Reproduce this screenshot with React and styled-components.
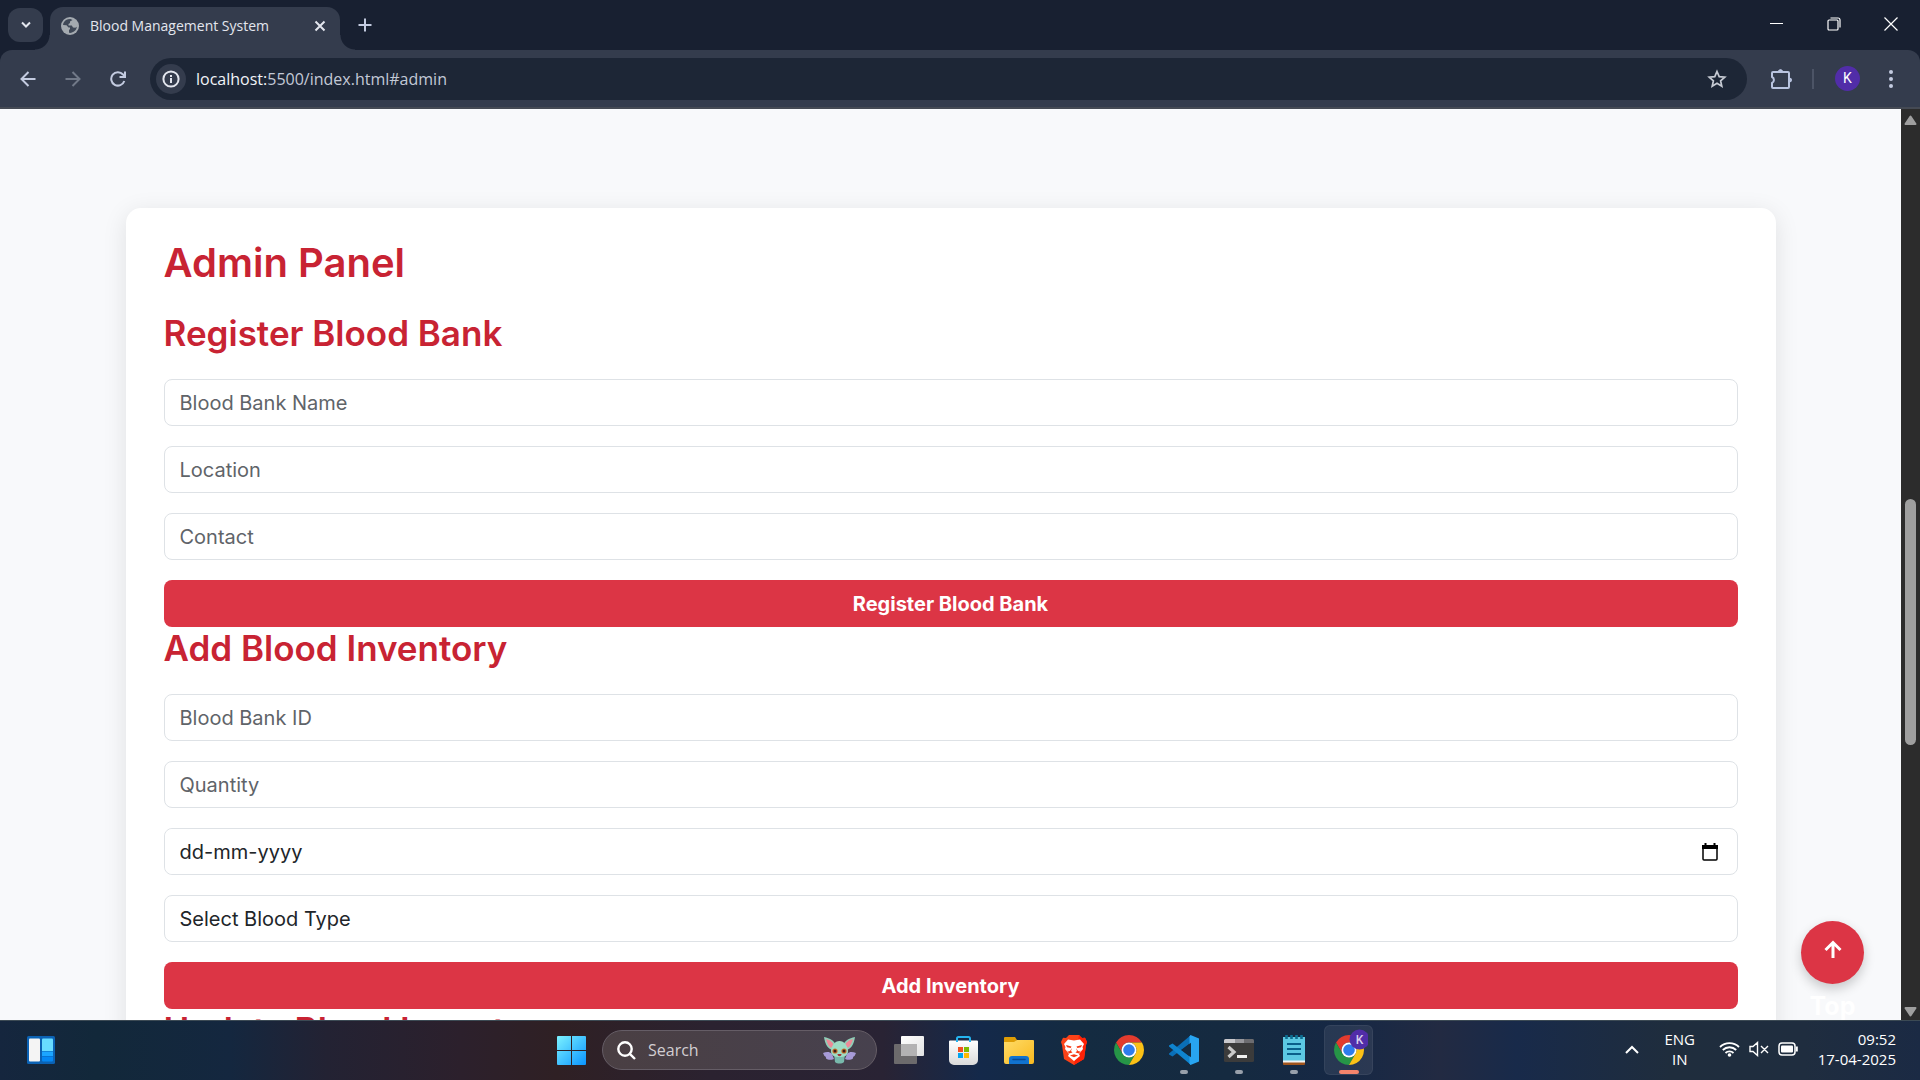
import React from 'react';
import styled, { createGlobalStyle } from 'styled-components';

const ui = '"Open Sans", "Noto Sans", sans-serif';

const Global = createGlobalStyle`
  * { box-sizing: border-box; }
  body { margin: 0; background: #f8f9fb; font-family: Inter, sans-serif; }
  button, input, select { font: inherit; margin: 0; }
  button { border: 0; padding: 0; background: none; color: inherit; cursor: pointer; }
  svg { display: block; flex: none; }
`;

const Screen = styled.div`
  height: 100vh;
  display: flex;
  flex-direction: column;
  overflow: hidden;
`;

/* ---------- browser frame ---------- */

const TabStrip = styled.header`
  flex: none;
  height: 50px;
  display: flex;
  padding-left: 8px;
  background: #182031;
  color: #e3e6ee;
  font-family: ${ui};
`;

const TabSearch = styled.button`
  width: 35px;
  height: 34px;
  margin-top: 8px;
  border-radius: 12px;
  background: #343c4d;
  display: grid;
  place-items: center;
`;

const Tab = styled.div`
  position: relative;
  width: 290px;
  margin: 7px 0 0 7px;
  padding: 0 12px 6px 11px;
  display: flex;
  align-items: center;
  gap: 11px;
  border-radius: 13px 13px 0 0;
  background: #343c4d;

  &::before, &::after {
    content: '';
    position: absolute;
    bottom: 0;
    width: 15px;
    height: 15px;
  }
  &::before {
    left: -15px;
    background: radial-gradient(circle at 0 0, transparent 14px, #343c4d 15px);
  }
  &::after {
    right: -15px;
    background: radial-gradient(circle at 100% 0, transparent 14px, #343c4d 15px);
  }
`;

const TabTitle = styled.span`
  flex: 1;
  font-size: 14px;
  line-height: 20px;
  white-space: nowrap;
`;

const FlatButton = styled.button`
  width: ${(p) => p.$w || 16}px;
  display: grid;
  place-items: center;
  color: ${(p) => p.$color || '#e3e6ee'};
`;

const NewTab = styled(FlatButton)`
  margin-left: 9px;
  height: 50px;
`;

const WindowButtons = styled.div`
  margin-left: auto;
  padding-right: 1px;
  display: flex;
  height: 48px;
`;

const Toolbar = styled.div`
  background: #182031;
  flex: none;
`;

const ToolbarInner = styled.div`
  height: 59px;
  padding: 0 7px 0 5px;
  display: flex;
  align-items: center;
  background: #343c4d;
  border-bottom: 2px solid #454a54;
  border-radius: 12px 12px 0 0;
  font-family: ${ui};
`;

const Omnibox = styled.div`
  flex: 1;
  height: 42px;
  margin: 0 12px 0 10px;
  padding: 0 20px 0 6px;
  display: flex;
  align-items: center;
  gap: 10px;
  border-radius: 21px;
  background: #1d2636;
  color: #c3c9d6;
`;

const SiteInfo = styled.button`
  width: 30px;
  height: 30px;
  border-radius: 50%;
  background: #343c4d;
  color: #e3e6ee;
  display: grid;
  place-items: center;
`;

const Address = styled.div`
  flex: 1;
  font-size: 16px;
  line-height: 24px;
  b { font-weight: 400; color: #f1f3f8; }
`;

const Divider = styled.span`
  width: 2px;
  height: 20px;
  margin: 0 21px 0 9px;
  background: #4c5466;
`;

const Avatar = styled.button`
  width: 25px;
  height: 25px;
  margin-right: 9px;
  border-radius: 50%;
  background: #512da8;
  color: #fff;
  font-family: Roboto, sans-serif;
  font-size: 14px;
  line-height: 25px;
`;

/* ---------- page ---------- */

const Viewport = styled.div`
  position: relative;
  flex: 1;
  min-height: 0;
  display: flex;
  overflow: hidden;
`;

const Page = styled.main`
  flex: 1;
  padding-top: 99px;
  overflow: hidden;
  background: #f8f9fb;
`;

const Card = styled.section`
  width: calc(100% - 48px);
  max-width: 1650px;
  margin: 0 auto;
  padding: 31px 38px;
  border-radius: 15px;
  background: #fff;
  box-shadow: 0 5px 25px rgba(0, 0, 0, 0.1);
`;

const Title = styled.h2`
  margin: 0 0 25px;
  color: #c82333;
  font-size: 40px;
  font-weight: 600;
  line-height: 48px;
`;

const Subtitle = styled.h3`
  margin: 0 0 25px;
  color: #c82333;
  font-size: 35px;
  font-weight: 600;
  line-height: 42px;
`;

const Form = styled.form`
  display: flex;
  flex-direction: column;
  gap: 20px;
`;

const Field = styled.input`
  width: 100%;
  height: 47px;
  padding: 0 15px;
  border: 1px solid #dee2e6;
  border-radius: 8px;
  background: #fff;
  color: #212529;
  font-size: 20px;
  line-height: 30px;
  outline: 0;
  &::placeholder { color: ${(p) => p.$ink || '#5f6469'}; opacity: 1; }
`;

const Select = styled(Field).attrs({ as: 'select' })`
  appearance: none;
`;

const DateBox = styled.div`
  display: flex;
  align-items: center;
  padding-right: 19px;
  border: 1px solid #dee2e6;
  border-radius: 8px;
`;

const DateField = styled(Field)`
  flex: 1;
  height: 45px;
  border: 0;
`;

const Submit = styled.button`
  height: 47px;
  border-radius: 8px;
  background: #dc3545;
  color: #fff;
  font-size: 20px;
  font-weight: 700;
  line-height: 30px;
`;

const ToTop = styled.button`
  position: absolute;
  right: 56px;
  bottom: 36px;
  width: 63px;
  height: 63px;
  padding-top: 19px;
  display: flex;
  flex-direction: column;
  align-items: center;
  gap: 30px;
  border-radius: 50%;
  background: #dc3545;
  box-shadow: 0 5px 12px rgba(0, 0, 0, 0.2);
  color: #fff;
  font-size: 25px;
  font-weight: 700;
  line-height: 37px;
`;

const Scrollbar = styled.div`
  width: 19px;
  display: flex;
  flex-direction: column;
  align-items: center;
  padding: 6px 0 3px;
  background: #2c2c2c;
`;

const Track = styled.div`
  flex: 1;
  display: grid;
  grid-template-rows: 374fr 246fr 262fr;
`;

const Thumb = styled.div`
  grid-row: 2;
  width: 11px;
  border-radius: 6px;
  background: #9f9f9f;
`;

/* ---------- taskbar ---------- */

const Taskbar = styled.footer`
  flex: none;
  height: 60px;
  padding-bottom: 1px;
  display: grid;
  grid-template-columns: 1fr auto 1fr;
  align-items: center;
  border-top: 1px solid #3c4a54;
  background: linear-gradient(90deg, #15263e 0, #12283a 5%, #14273f 12%, #232233 17%, #2c202c 24%, #2f2024 29%,
    #2b2230 37%, #292334 46%, #14294a 51%, #142b41 56%, #152a40 64%, #162845 70%, #222a42 75%, #182a4a 79%, #1f2d3d 87%, #1f2d3f 94%, #1b2a44 100%);
  color: #fff;
  font-family: ${ui};
`;

const Widgets = styled.button`
  width: 28px;
  margin-left: 27px;
`;

const Apps = styled.nav`
  display: flex;
  align-items: center;
`;

const App_ = styled.button`
  position: relative;
  width: 49px;
  height: 50px;
  margin: 0 3px;
  display: grid;
  place-items: center;
  border-radius: 6px;
  ${(p) => p.$active && `
    background: rgba(255, 255, 255, 0.08);
    box-shadow: inset 0 0 0 1px rgba(255, 255, 255, 0.06);
  `}
  &::after {
    content: '';
    display: ${(p) => (p.$open ? 'block' : 'none')};
    position: absolute;
    bottom: 1px;
    left: 50%;
    width: ${(p) => (p.$active ? 20 : 8)}px;
    height: 4px;
    transform: translateX(-50%);
    border-radius: 2px;
    background: ${(p) => (p.$active ? '#f4846c' : '#98a0ab')};
  }
`;

const SearchBox = styled.label`
  width: 275px;
  height: 40px;
  margin: 0 4px 0 3px;
  padding: 0 20px 0 14px;
  display: flex;
  align-items: center;
  gap: 12px;
  border: 1px solid #655d66;
  border-radius: 20px;
  background: linear-gradient(90deg, #4a3f43, #47414e);
`;

const SearchInput = styled.input`
  flex: 1;
  min-width: 0;
  padding: 0;
  border: 0;
  outline: 0;
  background: none;
  color: #fff;
  font-size: 16px;
  line-height: 24px;
  &::placeholder { color: #d2ced2; opacity: 1; }
`;

const Tray = styled.div`
  display: flex;
  justify-content: flex-end;
  align-items: center;
  padding: 0 24px 2px 0;
`;

const Lang = styled.button`
  width: 34px;
  margin: 0 22px 0 24px;
  font-size: 15px;
  line-height: 20px;
`;

const Status = styled.button`
  display: flex;
  align-items: center;
  gap: 9px;
  margin-right: 20px;
`;

const Clock = styled.button`
  text-align: right;
  font-size: 15px;
  line-height: 20px;
`;

/* ---------- icons ---------- */

const Line = ({ w = 24, h = w, box = `0 0 ${w} ${h}`, sw = 2, children, ...rest }) => (
  <svg width={w} height={h} viewBox={box} fill="none" stroke="currentColor" strokeWidth={sw} {...rest}>{children}</svg>
);

const Globe = () => (
  <svg width="18" height="18" viewBox="0 0 18 18">
    <circle cx="9" cy="9" r="9" fill="#a4aab0" />
    <path d="M7 2.200C4 3 2.200 5.300 2 8l3.500.2 2 2.300H9V12l-1 1v2.800c3.800.6 7.500-2.200 7.800-6l-1.500 1-2.300-.3-1.200-2H7.500V7L9 6V4.500L11.500 3 9.500 2z" fill="#3f4857" />
    <path d="M2 8.500 6.500 13v2.500C4 14.800 2 12 2 8.500z" fill="#a4aab0" />
  </svg>
);

const ChromeLogo = ({ badge }) => (
  <svg width="38" height="42" viewBox="-4 -6 38 42">
    <g transform="scale(.625)">
      <path d="M3.220 12A24 24 0 0 1 44.780 12H24A12 12 0 0 0 13.610 30z" fill="#e33b2e" />
      <path d="M3.220 12 13.610 30A12 12 0 0 0 34.390 30L24 48A24 24 0 0 1 3.220 12z" fill="#269547" />
      <path d="M44.780 12A24 24 0 0 1 24 48L34.390 30A12 12 0 0 0 24 12z" fill="#fbc116" />
      <circle cx="24" cy="24" r="12" fill="#fff" />
      <circle cx="24" cy="24" r="9.300" fill="#2f7cee" />
    </g>
    {badge && (
      <g>
        <circle cx="25.500" cy="4.500" r="10" fill="#512da8" />
        <text x="25.500" y="9" textAnchor="middle" fontSize="12" fontWeight="500" fontFamily="Roboto, sans-serif" fill="#d9d0ee">K</text>
      </g>
    )}
  </svg>
);

const WidgetsIcon = () => (
  <svg width="28" height="28" viewBox="0 0 28 28">
    <rect width="28" height="28" rx="1.500" fill="#0b62b4" />
    <rect x="2" y="2.500" width="11" height="23" rx="1" fill="#f4f4f4" />
    <path d="M15 3.500a1 1 0 0 1 1-1h9a1 1 0 0 1 1 1V15H15z" fill="#68dcff" />
    <path d="M15 15.500h11v4.500H15z" fill="#1ca6ff" />
    <path d="M15 20.500h11v4a1 1 0 0 1-1 1h-9a1 1 0 0 1-1-1z" fill="#0587f2" />
  </svg>
);

const StartIcon = () => (
  <svg width="29" height="29" viewBox="0 0 29 29">
    <defs>
      <linearGradient id="win" gradientUnits="userSpaceOnUse" x1="0" y1="0" x2="29" y2="29">
        <stop offset="0" stopColor="#7cf2ff" /><stop offset="1" stopColor="#0a94ff" />
      </linearGradient>
    </defs>
    <path fill="url(#win)" d="M1 0h13v14H0V1a1 1 0 0 1 1-1zM15 0h13a1 1 0 0 1 1 1v13H15zM0 15h14v14H1a1 1 0 0 1-1-1zM15 15h14v13a1 1 0 0 1-1 1H15z" />
  </svg>
);

const Creature = () => (
  <svg width="33" height="27" viewBox="0 0 33 27">
    <path d="M9 17C6 14 3 15 0 16c1 2 1 3 3 4-1 2 3 4 8 2zM24 17c3-3 6-2 9-1-1 2-1 3-3 4 1 2-3 4-8 2z" fill="#a79bd8" />
    <path d="M11 13C5 13 2 7 1 0c6 1 11 4 12 9zM22 13c6 0 9-6 10-13-6 1-11 4-12 9z" fill="#8fcfb8" />
    <path d="M10 11C6 11 4 6 3 2c4 1 7 3 8 7zM23 11c4 0 6-5 7-9-4 1-7 3-8 7z" fill="#ee8a97" />
    <path d="M11 17h11l-1 8c-2 2-7 2-9 0z" fill="#78b9ab" />
    <path d="M16.500 4C21 4 25 9 25 14s-4 6-8.500 6S8 19 8 14s4-10 8.500-10z" fill="#9edcc4" />
    <circle cx="12" cy="14" r="2.600" fill="#c8702c" /><circle cx="21" cy="14" r="2.600" fill="#c8702c" />
    <circle cx="12" cy="14" r="1.500" fill="#3a1c18" /><circle cx="21" cy="14" r="1.500" fill="#3a1c18" />
    <path d="M14.500 17h4c0 3-4 3-4 0z" fill="#a3303a" />
  </svg>
);

const TaskView = () => (
  <svg width="30" height="28" viewBox="0 0 30 28">
    <defs><linearGradient id="tv" x1="0" y1="0" x2="1" y2="1"><stop offset="0" stopColor="#fff" /><stop offset="1" stopColor="#e2e2e2" /></linearGradient></defs>
    <rect y="8" width="23" height="20" rx="1" fill="#6c6a6c" />
    <rect x="7" width="23" height="20" rx="1" fill="url(#tv)" />
    <path d="M7 8h16v12H8a1 1 0 0 1-1-1z" fill="#b3b2b3" />
  </svg>
);

const Store = () => (
  <svg width="29" height="29" viewBox="0 0 29 29">
    <defs><linearGradient id="st" x1="0" y1="0" x2="0" y2="1"><stop offset="0" stopColor="#fff" /><stop offset="1" stopColor="#dadada" /></linearGradient></defs>
    <path d="M1 4.500h27a1 1 0 0 1 1 1V24a5 5 0 0 1-5 5H5a5 5 0 0 1-5-5V5.500a1 1 0 0 1 1-1z" fill="url(#st)" />
    <path d="M8 6V2.500A1.500 1.500 0 0 1 9.500 1h10A1.500 1.500 0 0 1 21 2.500V6" fill="none" stroke="#25b4f0" strokeWidth="2" />
    <path d="M9 11h5v5H9z" fill="#f25022" /><path d="M15 11h5v5h-5z" fill="#7fba00" />
    <path d="M9 17h5v5H9z" fill="#00a4ef" /><path d="M15 17h5v5h-5z" fill="#ffb900" />
  </svg>
);

const Explorer = () => (
  <svg width="30" height="27" viewBox="0 0 30 27">
    <defs><linearGradient id="fo" x1="0" y1="0" x2="1" y2="1"><stop offset="0" stopColor="#ffdb67" /><stop offset="1" stopColor="#f9b91f" /></linearGradient></defs>
    <path d="M1 0h10l2 3-2 4H0V1a1 1 0 0 1 1-1z" fill="#de9d05" />
    <path d="M0 5h10l3-2h16a1 1 0 0 1 1 1v21a2 2 0 0 1-2 2H2a2 2 0 0 1-2-2z" fill="url(#fo)" />
    <path d="M5 27v-5a3 3 0 0 1 3-3h14a3 3 0 0 1 3 3v5z" fill="#1173d0" />
    <path d="M9 22.500h12" stroke="#0a4a94" strokeWidth="1.500" strokeLinecap="round" />
  </svg>
);

const Brave = () => (
  <svg width="26" height="30" viewBox="0 0 26 30">
    <path d="M8 0h10l3 3 3-.2L26 7l-1 3-2 14-10 6-10-6L1 10 0 7l2-4.200L5 3z" fill="#fb4218" />
    <path d="M18 0l3 3 3-.2L26 7l-1 3-2 14-10 6z" fill="#ff2105" />
    <path d="M7 4.500l6 1 6-1 4 4.500-1.500 3 .5 2-4 5 1 2-6 5-6-5 1-2-4-5 .5-2L3 9z" fill="#fff" />
    <path d="M5 10l5.500 1.500-.8 1.500-3.700-.8zM21 10l-5.500 1.500.8 1.500 3.700-.8z" fill="#f73a14" />
    <path d="M11 13l-1 3 1.500 1.500L8 18.500 5.500 15 7 16.500l2-.5zM15 13l1 3-1.500 1.500 3.500 1 2.500-3.500-1.500 1.500-2-.5z" fill="#f73a14" />
    <path d="M9 20.500l4 1.700 4-1.700-4-1.200z" fill="#f73a14" />
  </svg>
);

const Code = () => (
  <svg width="30" height="30" viewBox="0 0 30 30">
    <path d="M22 7.500 3.500 21.500 0 19.500v-1L22 0z" fill="#0a6fb8" />
    <path d="M22 22.500 3.500 8.500 0 10.500v1L22 30z" fill="#0f84cf" />
    <path d="M21.500 0 30 3.500v23L21.500 30l-1-1.500V1.500z" fill="#28a5f2" />
    <path d="M22 7.700v14.600L12.500 15z" fill="#142b41" />
  </svg>
);

const TerminalIcon = () => (
  <svg width="30" height="23" viewBox="0 0 30 23">
    <rect width="30" height="23" rx="1.500" fill="#3b3b3b" />
    <path d="M0 4V1.500A1.500 1.500 0 0 1 1.500 0H11v4z" fill="#c8c8cc" />
    <path d="M11 0h9v4h-9z" fill="#97979c" /><path d="M20 0h8.500A1.500 1.500 0 0 1 30 1.500V4H20z" fill="#6c6c70" />
    <path d="M4.500 8l5.500 5-5.500 5" fill="none" stroke="#c9c9c9" strokeWidth="3.200" />
    <path d="M13 17.500h10" stroke="#f0f0f0" strokeWidth="3" />
  </svg>
);

const Notepad = () => (
  <svg width="22" height="30" viewBox="0 0 22 30">
    <path d="M0 22h22v7a1 1 0 0 1-1 1H1a1 1 0 0 1-1-1z" fill="#a0541c" />
    <path d="M0 22h22v5.500H0z" fill="#f0f4f5" />
    <path d="M0 2h22v23.500H0z" fill="#5cc8e2" />
    <path d="M3.500 0v4M8.500 0v4M13.500 0v4M18.500 0v4" stroke="#0d6f92" strokeWidth="2.600" />
    <path d="M4 9h14M4 14h14M4 19h14" stroke="#0a5f8a" strokeWidth="2" />
  </svg>
);

const Wifi = () => (
  <Line w={21} h={16} sw={1.8}>
    <path d="M1 6a13.400 13.400 0 0 1 19 0M3.800 9a9.500 9.500 0 0 1 13.400 0M6.500 12a5.700 5.700 0 0 1 8 0" />
    <circle cx="10.500" cy="14" r="1.800" fill="currentColor" stroke="none" />
  </Line>
);

const Muted = () => (
  <Line w={20} h={16} sw={1.4}>
    <path d="M1 5.500h3L8.500 1.500v13L4 10.500H1zM12 5l7 7M19 5l-7 7" />
  </Line>
);

const Battery = () => (
  <Line w={20} h={14} sw={1.5}>
    <rect x="1" y="1" width="16" height="12" rx="3" />
    <rect x="3" y="3.500" width="12" height="7" rx="1" fill="currentColor" stroke="none" />
    <path d="M18.800 4.500v5" strokeWidth="2" />
  </Line>
);

const Caret = ({ up }) => (
  <svg width="13" height="10" viewBox="0 0 13 10" fill="#9f9f9f" stroke="#9f9f9f" strokeLinejoin="round" strokeWidth="2">
    <path d={up ? 'M1.500 9h10L6.500 1.500z' : 'M1.500 1h10L6.500 8.500z'} />
  </svg>
);

/* ---------- data ---------- */

const apps = [
  { name: 'Task View', icon: <TaskView /> },
  { name: 'Microsoft Store', icon: <Store /> },
  { name: 'File Explorer', icon: <Explorer /> },
  { name: 'Brave', icon: <Brave /> },
  { name: 'Google Chrome', icon: <ChromeLogo /> },
  { name: 'Visual Studio Code', icon: <Code />, open: true },
  { name: 'Terminal', icon: <TerminalIcon />, open: true },
  { name: 'Notepad', icon: <Notepad />, open: true },
  { name: 'Chrome profile K', icon: <ChromeLogo badge />, open: true, active: true },
];

const stop = (e) => e.preventDefault();

function Browser() {
  return (
    <>
      <TabStrip>
        <TabSearch aria-label="Search tabs"><Line w={12} h={8}><path d="M2 1.500l4 4 4-4" /></Line></TabSearch>
        <Tab>
          <Globe />
          <TabTitle>Blood Management System</TabTitle>
          <FlatButton aria-label="Close tab"><Line w={12}><path d="M1.500 1.500l9 9M10.500 1.500l-9 9" /></Line></FlatButton>
        </Tab>
        <NewTab $w={32} $color="#c3cbe0" aria-label="New tab"><Line w={14}><path d="M7 .5v13M.5 7h13" /></Line></NewTab>
        <WindowButtons>
          <FlatButton $w={57} $color="#fff" aria-label="Minimize"><Line w={13} sw={1}><path d="M0 5.500h13" /></Line></FlatButton>
          <FlatButton $w={57} $color="#fff" aria-label="Restore">
            <Line w={14} sw={1.2}><rect x="1" y="3" width="10" height="10" rx="1" /><path d="M3.500 1H11a2 2 0 0 1 2 2v7.500" /></Line>
          </FlatButton>
          <FlatButton $w={57} $color="#fff" aria-label="Close"><Line w={14} sw={1.2}><path d="M.5.5l13 13M13.500.5l-13 13" /></Line></FlatButton>
        </WindowButtons>
      </TabStrip>
      <Toolbar>
        <ToolbarInner>
          <FlatButton $w={45} $color="#c3cbe0" aria-label="Back"><Line w={16}><path d="M15.500 8H2M8.500 1 1.500 8l7 7" /></Line></FlatButton>
          <FlatButton $w={45} $color="#717988" aria-label="Forward"><Line w={16}><path d="M.5 8H14M7.500 1l7 7-7 7" /></Line></FlatButton>
          <FlatButton $w={45} $color="#c3cbe0" aria-label="Reload">
            <Line w={16}><path d="M14.300 10A6.700 6.700 0 1 1 13 3.500L15 6M15 .5V6H9.500" /></Line>
          </FlatButton>
          <Omnibox>
            <SiteInfo aria-label="Site information">
              <Line w={18}><circle cx="9" cy="9" r="7.600" /><path d="M9 8v5M9 5v2" /></Line>
            </SiteInfo>
            <Address><b>localhost:</b>5500/index.html#admin</Address>
            <FlatButton $w={20} $color="#c6cad3" aria-label="Bookmark">
              <Line w={20} sw={1.7}><path d="M10 2.500l2.200 5.100 5.600.5-4.200 3.700 1.200 5.400L10 14.300l-4.800 2.900 1.200-5.400L2.200 8.100l5.600-.5z" /></Line>
            </FlatButton>
          </Omnibox>
          <FlatButton $w={44} $color="#b9c4e0" aria-label="Extensions">
            <Line w={22}>
              <path d="M3 4h15a1 1 0 0 1 1 1v14a1 1 0 0 1-1 1H3a1 1 0 0 1-1-1v-4a3.300 3.300 0 0 0 0-6V5a1 1 0 0 1 1-1z" strokeLinejoin="round" />
              <path d="M8 4a2.500 2.500 0 0 1 5 0zM19 9.500a2.500 2.500 0 0 1 0 5z" fill="currentColor" stroke="none" />
              <path d="M8.300 3a2.300 2.300 0 0 1 4.400 0zM20 10a2 2 0 0 1 0 4z" fill="currentColor" stroke="none" />
            </Line>
          </FlatButton>
          <Divider />
          <Avatar aria-label="Profile">K</Avatar>
          <FlatButton $w={44} $color="#c3cbe0" aria-label="Menu">
            <svg width="4" height="18" viewBox="0 0 4 18" fill="currentColor"><circle cx="2" cy="2" r="2" /><circle cx="2" cy="9" r="2" /><circle cx="2" cy="16" r="2" /></svg>
          </FlatButton>
        </ToolbarInner>
      </Toolbar>
    </>
  );
}

function AdminPage() {
  return (
    <Viewport>
      <Page>
        <Card id="admin">
          <Title>Admin Panel</Title>
          <Subtitle>Register Blood Bank</Subtitle>
          <Form onSubmit={stop}>
            {['Blood Bank Name', 'Location', 'Contact'].map((t) => <Field key={t} placeholder={t} aria-label={t} />)}
            <Submit>Register Blood Bank</Submit>
          </Form>
          <Subtitle>Add Blood Inventory</Subtitle>
          <Form onSubmit={stop}>
            {['Blood Bank ID', 'Quantity'].map((t) => <Field key={t} placeholder={t} aria-label={t} />)}
            <DateBox>
              <DateField placeholder="dd-mm-yyyy" aria-label="Expiry date" $ink="#212529" />
              <FlatButton type="button" $w={16} $color="#000" aria-label="Open calendar">
                <Line w={16} h={18}><path d="M1 3.500h14V16a1 1 0 0 1-1 1H2a1 1 0 0 1-1-1z" strokeWidth="1.500" /><path d="M0 4h16" strokeWidth="4" /><path d="M3.500 0v3M12.500 0v3" /></Line>
              </FlatButton>
            </DateBox>
            <Select aria-label="Blood type"><option>Select Blood Type</option></Select>
            <Submit>Add Inventory</Submit>
          </Form>
          <Subtitle>Update Blood Inventory</Subtitle>
        </Card>
      </Page>
      <Scrollbar>
        <Caret up />
        <Track><Thumb /></Track>
        <Caret />
      </Scrollbar>
      <ToTop>
        <Line w={18} sw={3}><path d="M9 18V2.500M1.500 10 9 2.500l7.500 7.500" /></Line>
        <span>Top</span>
      </ToTop>
    </Viewport>
  );
}

function Desktop() {
  return (
    <Taskbar>
      <Widgets aria-label="Widgets"><WidgetsIcon /></Widgets>
      <Apps>
        <App_ aria-label="Start"><StartIcon /></App_>
        <SearchBox>
          <Line w={19} sw={2.4}><circle cx="8" cy="8" r="6.700" /><path d="M12.800 12.800l5.200 5.200" /></Line>
          <SearchInput placeholder="Search" aria-label="Search" />
          <Creature />
        </SearchBox>
        {apps.map((a) => <App_ key={a.name} aria-label={a.name} $open={a.open} $active={a.active}>{a.icon}</App_>)}
      </Apps>
      <Tray>
        <FlatButton $w={14} $color="#fff" aria-label="Hidden icons"><Line w={14} h={9}><path d="M1 8l6-6 6 6" /></Line></FlatButton>
        <Lang>ENG<br />IN</Lang>
        <Status aria-label="Network, sound and battery"><Wifi /><Muted /><Battery /></Status>
        <Clock>09:52<br />17-04-2025</Clock>
      </Tray>
    </Taskbar>
  );
}

export default function App() {
  return (
    <Screen>
      <Global />
      <Browser />
      <AdminPage />
      <Desktop />
    </Screen>
  );
}
